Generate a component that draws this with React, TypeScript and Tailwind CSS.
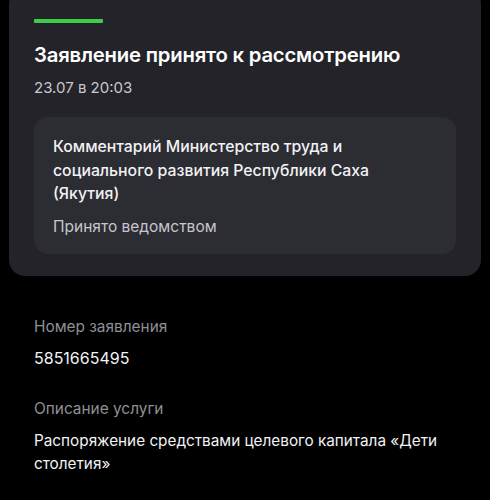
export default function App() {
  return (
    <div className="min-h-[500px] w-[490px] overflow-hidden bg-black text-white" style={{ fontFamily: "Inter, 'Noto Sans', sans-serif" }}>
      <div className="mx-[9px] -mt-[12px] rounded-[16px] bg-[#232329] px-[25px] pt-[31px] pb-[22px]">
        <div className="h-[4px] w-[69px] rounded-[1px] bg-[#3ccd4a]" />
        <div className="mt-[19px] text-[20.3px] font-semibold leading-[26px] tracking-[-0.2px]">Заявление принято к рассмотрению</div>
        <div className="mt-[10px] text-[15px] leading-[20px] text-[#c9c9ce]">23.07 в 20:03</div>
        <div className="mt-[19px] rounded-[14px] bg-[#2c2c33] px-[19px] pt-[18px] pb-[17px]">
          <div className="max-w-[350px] text-[15.8px] font-medium leading-[23.5px] text-[#f2f2f4]">
            Комментарий Министерство труда и социального развития Республики Саха (Якутия)
          </div>
          <div className="mt-[11px] text-[15.5px] leading-[20px] text-[#c6c6cb]">Принято ведомством</div>
        </div>
      </div>
      <div className="pl-[34px] pr-[16px] pt-[41px]">
        <div className="text-[15.4px] leading-[20px] text-[#8f8f96]">Номер заявления</div>
        <div className="mt-[11px] text-[16px] leading-[20px] text-[#f2f2f4]">5851665495</div>
        <div className="mt-[31px] text-[15.4px] leading-[20px] text-[#8f8f96]">Описание услуги</div>
        <div className="mt-[10px] max-w-[420px] text-[15.3px] leading-[23.5px] text-[#f2f2f4]">
          Распоряжение средствами целевого капитала «Дети столетия»
        </div>
      </div>
    </div>
  );
}
